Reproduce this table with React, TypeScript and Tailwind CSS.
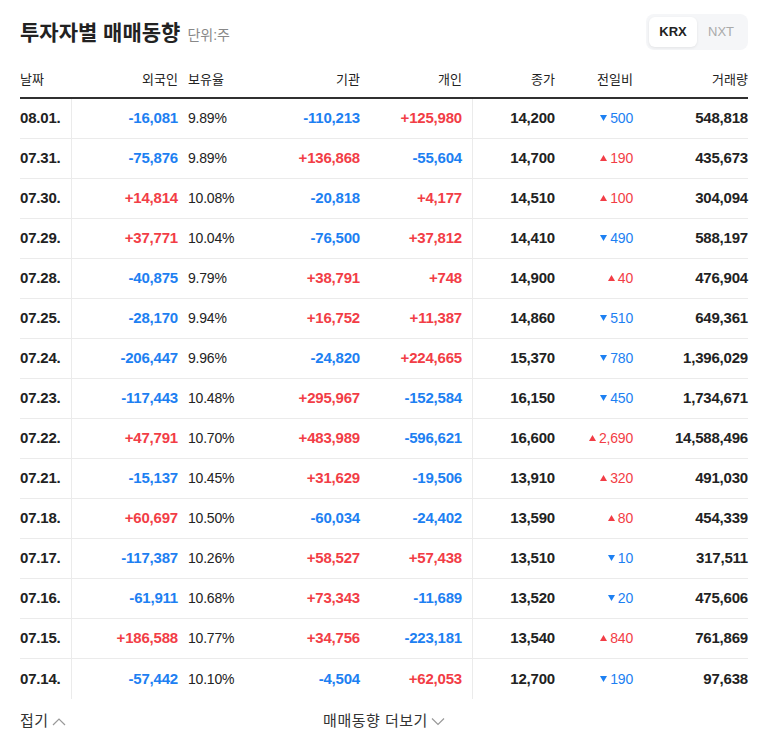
import React from "react";

type Row = {
  date: string;
  foreign: string;
  ratio: string;
  inst: string;
  indiv: string;
  close: string;
  diff: string;
  up: boolean;
  volume: string;
};

const rows: Row[] = [
  { date: "08.01.", foreign: "-16,081", ratio: "9.89%", inst: "-110,213", indiv: "+125,980", close: "14,200", diff: "500", up: false, volume: "548,818" },
  { date: "07.31.", foreign: "-75,876", ratio: "9.89%", inst: "+136,868", indiv: "-55,604", close: "14,700", diff: "190", up: true, volume: "435,673" },
  { date: "07.30.", foreign: "+14,814", ratio: "10.08%", inst: "-20,818", indiv: "+4,177", close: "14,510", diff: "100", up: true, volume: "304,094" },
  { date: "07.29.", foreign: "+37,771", ratio: "10.04%", inst: "-76,500", indiv: "+37,812", close: "14,410", diff: "490", up: false, volume: "588,197" },
  { date: "07.28.", foreign: "-40,875", ratio: "9.79%", inst: "+38,791", indiv: "+748", close: "14,900", diff: "40", up: true, volume: "476,904" },
  { date: "07.25.", foreign: "-28,170", ratio: "9.94%", inst: "+16,752", indiv: "+11,387", close: "14,860", diff: "510", up: false, volume: "649,361" },
  { date: "07.24.", foreign: "-206,447", ratio: "9.96%", inst: "-24,820", indiv: "+224,665", close: "15,370", diff: "780", up: false, volume: "1,396,029" },
  { date: "07.23.", foreign: "-117,443", ratio: "10.48%", inst: "+295,967", indiv: "-152,584", close: "16,150", diff: "450", up: false, volume: "1,734,671" },
  { date: "07.22.", foreign: "+47,791", ratio: "10.70%", inst: "+483,989", indiv: "-596,621", close: "16,600", diff: "2,690", up: true, volume: "14,588,496" },
  { date: "07.21.", foreign: "-15,137", ratio: "10.45%", inst: "+31,629", indiv: "-19,506", close: "13,910", diff: "320", up: true, volume: "491,030" },
  { date: "07.18.", foreign: "+60,697", ratio: "10.50%", inst: "-60,034", indiv: "-24,402", close: "13,590", diff: "80", up: true, volume: "454,339" },
  { date: "07.17.", foreign: "-117,387", ratio: "10.26%", inst: "+58,527", indiv: "+57,438", close: "13,510", diff: "10", up: false, volume: "317,511" },
  { date: "07.16.", foreign: "-61,911", ratio: "10.68%", inst: "+73,343", indiv: "-11,689", close: "13,520", diff: "20", up: false, volume: "475,606" },
  { date: "07.15.", foreign: "+186,588", ratio: "10.77%", inst: "+34,756", indiv: "-223,181", close: "13,540", diff: "840", up: true, volume: "761,869" },
  { date: "07.14.", foreign: "-57,442", ratio: "10.10%", inst: "-4,504", indiv: "+62,053", close: "12,700", diff: "190", up: false, volume: "97,638" },
];

const cols =
  "grid grid-cols-[52px_116px_72px_110px_103px_92px_78px_105px]";

function signColor(v: string) {
  return v.startsWith("+") ? "text-[#f23d46]" : "text-[#1d80f2]";
}

function Triangle({ up }: { up: boolean }) {
  return (
    <svg width="7" height="6" viewBox="0 0 7 6" className="mb-[1px] mr-[3px]">
      {up ? (
        <polygon points="3.5,0 7,6 0,6" fill="#f23d46" />
      ) : (
        <polygon points="0,0 7,0 3.5,6" fill="#1d80f2" />
      )}
    </svg>
  );
}

function Chevron({ up }: { up: boolean }) {
  return (
    <svg width="14" height="9" viewBox="0 0 14 9" className="ml-[3px]">
      <polyline
        points={up ? "1,8 7,2 13,8" : "1,1.5 7,7.5 13,1.5"}
        fill="none"
        stroke="#999"
        strokeWidth="1.2"
      />
    </svg>
  );
}

export default function App() {
  return (
    <div className="min-h-[749px] bg-white px-5 font-['Liberation_Sans','Noto_Sans_CJK_KR',sans-serif] text-[#222]">
      <div className="flex h-[50px] items-start justify-between pt-[14px]">
        <div className="flex h-9 items-baseline pt-[3px]">
          <h2 className="text-[21px] font-bold">투자자별 매매동향</h2>
          <span className="ml-[7px] text-[14px] text-[#888]">단위:주</span>
        </div>
        <div className="flex h-9 rounded-[8px] bg-[#f5f6f8] p-[3px]">
          <button
            type="button"
            className="h-[30px] w-[48px] rounded-[6px] bg-white text-[13px] font-bold text-[#222] shadow-[0_1px_3px_rgba(0,0,0,0.08)]"
          >
            KRX
          </button>
          <button type="button" className="h-[30px] w-[48px] text-[13px] text-[#aaa]">
            NXT
          </button>
        </div>
      </div>

      <div className={`${cols} h-[49px] items-center border-b-2 border-[#303030] pt-[12px] text-[13px]`}>
        <span>날짜</span>
        <span className="pr-[10px] text-right">외국인</span>
        <span>보유율</span>
        <span className="pr-[10px] text-right">기관</span>
        <span className="pr-[11px] text-right">개인</span>
        <span className="pr-[10px] text-right">종가</span>
        <span className="pr-[10px] text-right">전일비</span>
        <span className="text-right">거래량</span>
      </div>

      <div>
        {rows.map((r, i) => (
          <div
            key={r.date}
            className={`${cols} h-10 ${i < rows.length - 1 ? "border-b border-[#ebebeb]" : ""} text-[15px] tracking-[-0.2px]`}
          >
            <span className="flex items-center border-r border-[#ebebeb] font-bold">{r.date}</span>
            <span className={`flex items-center justify-end pr-[10px] font-bold ${signColor(r.foreign)}`}>
              {r.foreign}
            </span>
            <span className="flex items-center text-[14px]">{r.ratio}</span>
            <span className={`flex items-center justify-end pr-[10px] font-bold ${signColor(r.inst)}`}>
              {r.inst}
            </span>
            <span className={`flex items-center justify-end border-r border-[#ebebeb] pr-[10px] font-bold ${signColor(r.indiv)}`}>
              {r.indiv}
            </span>
            <span className="flex items-center justify-end pr-[10px] font-bold">{r.close}</span>
            <span
              className={`flex items-center justify-end pr-[10px] text-[14px] ${r.up ? "text-[#f23d46]" : "text-[#1d80f2]"}`}
            >
              <Triangle up={r.up} />
              {r.diff}
            </span>
            <span className="flex items-center justify-end font-bold">{r.volume}</span>
          </div>
        ))}
      </div>

      <div className="grid h-[44px] grid-cols-[1fr_auto_1fr] items-center text-[15px] tracking-[0.5px] text-[#333]">
        <button type="button" className="flex items-center justify-self-start">
          접기
          <Chevron up />
        </button>
        <button type="button" className="flex items-center">
          매매동향 더보기
          <Chevron up={false} />
        </button>
        <span />
      </div>
    </div>
  );
}
